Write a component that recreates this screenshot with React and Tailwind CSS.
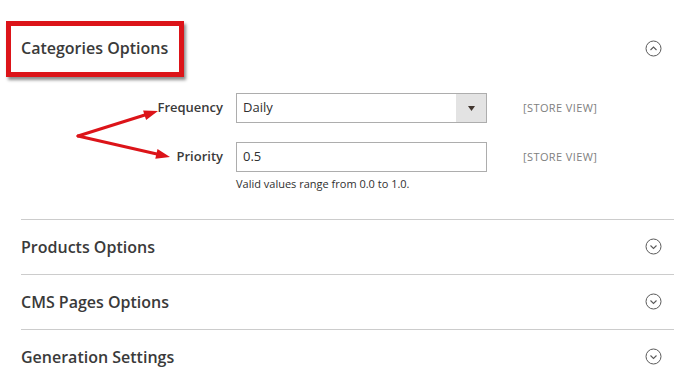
const font = "font-['Open_Sans',sans-serif]";

function CircleChevron({ up }) {
  return (
    <svg width="17" height="17" viewBox="0 0 17 17" fill="none">
      <circle cx="8.5" cy="8.5" r="7.5" stroke="#5a5a5a" strokeWidth="1" />
      {up ? (
        <path d="M5.5 10 L8.5 7 L11.5 10" stroke="#5a5a5a" strokeWidth="1.1" />
      ) : (
        <path d="M5.5 7.5 L8.5 10.5 L11.5 7.5" stroke="#5a5a5a" strokeWidth="1.1" />
      )}
    </svg>
  );
}

function Section({ title }) {
  return (
    <div className="border-t border-[#cccccc] h-[55px] flex items-center justify-between pr-[12px]">
      <h2 className="text-[16px] font-semibold text-[#3a3a3a]">{title}</h2>
      <CircleChevron />
    </div>
  );
}

export default function App() {
  return (
    <div className={`relative w-[685px] h-[374px] bg-white overflow-hidden ${font}`}>
      <div className="ml-[21px] w-[653px]">
        {/* Categories section, open */}
        <div className="pt-[36px] pb-[26px]">
          <div className="flex items-center justify-between h-[24px] pr-[12px]">
            <h2 className="text-[16px] font-semibold text-[#3a3a3a]">Categories Options</h2>
            <CircleChevron up />
          </div>

          <div className="mt-[33px] flex flex-col gap-[19px]">
            <div className="flex items-center">
              <label className="w-[202px] text-right text-[13px] font-semibold text-[#3a3a3a]">Frequency</label>
              <div className="ml-[13px] w-[251px] h-[30px] border border-[#adadad] flex items-center">
                <span className="flex-1 pl-[6px] text-[13px] text-[#303030]">Daily</span>
                <div className="w-[30px] h-full bg-[#e3e3e3] flex items-center justify-center">
                  <svg width="7" height="5" viewBox="0 0 7 5"><path d="M0 0 L7 0 L3.5 5 Z" fill="#41362f" /></svg>
                </div>
              </div>
              <span className="ml-[36px] text-[11px] tracking-[0.4px] text-[#808080]">[STORE VIEW]</span>
            </div>

            <div className="flex items-start">
              <label className="w-[202px] h-[30px] flex items-center justify-end text-[13px] font-semibold text-[#3a3a3a]">Priority</label>
              <div className="ml-[13px] w-[251px]">
                <div className="h-[30px] border border-[#adadad] flex items-center pl-[6px] text-[13px] text-[#303030]">0.5</div>
                <p className="mt-[4px] text-[11px] text-[#303030]">Valid values range from 0.0 to 1.0.</p>
              </div>
              <span className="ml-[36px] h-[30px] flex items-center text-[11px] tracking-[0.4px] text-[#808080]">[STORE VIEW]</span>
            </div>
          </div>
        </div>

        <Section title="Products Options" />
        <Section title="CMS Pages Options" />
        <Section title="Generation Settings" />
      </div>

      {/* annotation: red frame */}
      <div className="absolute left-[6px] top-[21px] w-[178px] h-[56px] border-[5px] border-[#dc1419] shadow-[2px_3px_3px_rgba(0,0,0,0.45)]" />

      {/* annotation: arrows */}
      <svg className="absolute inset-0 pointer-events-none" width="685" height="374">
        <g stroke="#dc1419" strokeWidth="3" strokeLinecap="round">
          <line x1="78" y1="136" x2="148" y2="114" />
          <line x1="78" y1="136" x2="159" y2="154.5" />
        </g>
        <g fill="#dc1419">
          <polygon points="158,111 146.1,120 143.1,110.4" />
          <polygon points="170,157 155.3,158.8 157.5,149" />
        </g>
      </svg>
    </div>
  );
}
